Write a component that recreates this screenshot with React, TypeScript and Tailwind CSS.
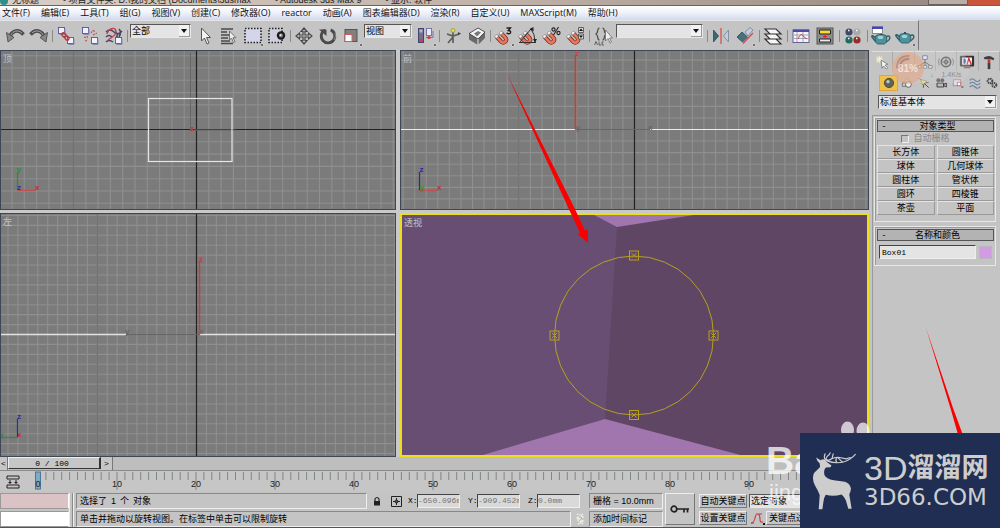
import React from "react";

type Kids = { children?: React.ReactNode };

const RED = "#c0504d";

function Tool({ label, children, more }: Kids & { label: string; more?: boolean }) {
  return (
    <button type="button" aria-label={label} title={label} className="h-6 w-6 shrink-0">
      <svg viewBox="0 0 24 24" className="h-6 w-6" fill="none">
        {children}
        {more && <path d="M20 20h2v2h-2z" fill="#111" stroke="#eee" strokeWidth=".5" />}
      </svg>
    </button>
  );
}

function Sep({ wide }: { wide?: boolean }) {
  return (
    <span className={wide ? "flex w-1 shrink-0 justify-center" : "flex w-[3px] shrink-0 justify-center"}>
      <span className="h-3 w-px bg-[#8a8a8a]" />
    </span>
  );
}

function Combo({ label, options, className }: { label: string; options: string[]; className: string }) {
  return (
    <span className={`relative shrink-0 ${className}`}>
      <select
        aria-label={label}
        className="block h-[14px] w-full appearance-none border border-r-[#e8e8e8] border-b-[#e8e8e8] border-t-[#555] border-l-[#555] bg-[#e4e4e4] pl-px text-[9px] leading-[12px] text-black"
      >
        {options.map((o) => (
          <option key={o}>{o}</option>
        ))}
      </select>
      <span className="pointer-events-none absolute top-px right-px flex h-3 w-[11px] items-center justify-center border-r border-b border-[#999] bg-[#f2f2f2]">
        <svg viewBox="0 0 6 4" className="h-1 w-1.5">
          <path d="M0 0h6L3 4z" fill="#111" />
        </svg>
      </span>
    </span>
  );
}

const Magnet = () => (
  <g>
    <path d="M4.500 12.500L9 17.500C12 20.300 15.800 16.700 13.300 13.700L9 9" stroke="#7d3226" strokeWidth="4.200" />
    <path d="M4.500 12.500L9 17.500C12 20.300 15.800 16.700 13.300 13.700L9 9" stroke="#ea765c" strokeWidth="2.600" />
    <path d="M3 13.800l3-2.800M7.500 10.300l3-2.800" stroke="#8a8a8a" strokeWidth="3" />
    <path d="M3.500 13.300l2-1.900M8 9.800l2-1.900" stroke="#f2f2f2" strokeWidth="2" />
  </g>
);

const Cube = ({ x, y }: { x: number; y: number }) => (
  <g>
    <rect x={x} y={y} width="6" height="6" fill="#f1f1fa" stroke="#54549a" strokeWidth=".9" />
    <path d={`M${x + 6.500} ${y + 1.500}v5.500h-5.500`} stroke="#8a8ab4" />
  </g>
);

const Teapot = ({ y }: { y: number }) => (
  <g transform={`translate(0 ${y})`}>
    <path d="M7 9c-2-4-5-4-4-2l4 5M17 7c4-3 6 2 0 5" stroke="#2f626b" strokeWidth="1.500" />
    <path d="M7 5.500c3-1.500 7-1.500 10 0 2 4 0 8.500-2 8.500H9c-2 0-4-4.500-2-8.500z" fill="#4a929c" stroke="#28545c" strokeWidth=".8" />
    <path d="M8.500 6.500c2-1 4-1 6 0l-1 2.500h-4z" fill="#9fd0d4" />
    <path d="M11 3h2v2h-2z" fill="#28545c" />
  </g>
);

const menus = [
  "文件(F)", "编辑(E)", "工具(T)", "组(G)", "视图(V)", "创建(C)", "修改器(O)", "reactor",
  "动画(A)", "图表编辑器(D)", "渲染(R)", "自定义(U)", "MAXScript(M)", "帮助(H)",
];

function TitleBar() {
  return (
    <header className="flex h-[6px] shrink-0 items-end overflow-hidden border-b border-[#6d625c] bg-gradient-to-r from-[#d9cfc6] via-[#c0b2a8] to-[#93857d] text-[9px] leading-[9px] whitespace-nowrap text-[#222]">
      <span className="h-[5px] w-2 rounded-b-sm bg-[#2f8f8f]" />
      <span className="ml-1">无标题</span>
      <span className="ml-6">- 项目文件夹: D:\我的文档 (Documents\3dsmax</span>
      <span className="ml-6">- Autodesk 3ds Max 9</span>
      <span className="ml-6">- 显示: 软件</span>
      <span className="ml-auto h-[5px] w-10 border border-t-0 border-[#6b5f5c] bg-[#b9aea8]" />
      <span className="h-[5px] w-8 bg-[#c9553c]" />
    </header>
  );
}

function MenuBar() {
  return (
    <nav className="flex h-[14px] shrink-0 items-center gap-[11px] bg-gradient-to-b from-white via-[#eef1fa] to-[#d3daee] pl-0.5 font-['Open_Sans','Noto_Sans_CJK_SC',sans-serif] text-[9px] leading-[14px] whitespace-nowrap text-[#111]">
      {menus.map((m) => (
        <button type="button" key={m}>{m}</button>
      ))}
    </nav>
  );
}

function ToolBar() {
  return (
    <div className="flex h-[30px] shrink-0">
      <div className="flex items-center border-t border-r border-t-[#e4e4e4] border-r-[#777] pr-px pl-[3px]">
        <Tool label="撤销">
          <path d="M6.500 14C8 7 15 4 20.500 10.500" stroke="#4c4c4c" strokeWidth="3.600" />
          <path d="M7.500 11.500C10 6.500 15 5.500 19 9" stroke="#a9a9a9" strokeWidth="1" />
          <path d="M3.500 8.500l1.500 9.500 6-4.500z" fill="#888" stroke="#444" strokeWidth=".8" />
        </Tool>
        <Tool label="重做">
          <path d="M17.500 14C16 7 9 4 3.500 10.500" stroke="#4c4c4c" strokeWidth="3.600" />
          <path d="M16.500 11.500C14 6.500 9 5.500 5 9" stroke="#a9a9a9" strokeWidth="1" />
          <path d="M20.500 8.500l-1.500 9.500-6-4.500z" fill="#888" stroke="#444" strokeWidth=".8" />
        </Tool>
        <Sep />
        <Tool label="选择并链接">
          <Cube x={4.500} y={3.500} />
          <Cube x={13.500} y={13.500} />
          <ellipse cx="10" cy="11" rx="2.500" ry="1.700" transform="rotate(45 10 11)" stroke="#b8383c" strokeWidth="1.300" />
          <ellipse cx="12.800" cy="14" rx="2.500" ry="1.700" transform="rotate(45 12.800 14)" stroke="#b8383c" strokeWidth="1.300" />
        </Tool>
        <Tool label="断开当前选择链接">
          <Cube x={4.500} y={3.500} />
          <Cube x={13.500} y={13.500} />
          <path d="M6 13l3 1M7 17l3-1M13 9l2-3M15 11l4-2M9 12l1 3M16 6v3" stroke="#c0575a" strokeWidth="1.200" strokeDasharray="2 1" />
        </Tool>
        <Tool label="绑定到空间扭曲">
          <path d="M4 8q4-4 8 0t8-1M4 13q3-3 6 0M4 18q3-3 7 0M13 8q4 2 1 6M17 5q3 3 0 8" stroke="#3f4468" strokeWidth="1.500" />
          <path d="M5 10c1-5 8-8 9-3s-5 6-8 9" stroke="#cc3f42" strokeWidth="1.400" />
          <Cube x={13.500} y={13.500} />
        </Tool>
        <Sep />
        <Combo label="选择过滤器" options={["全部", "几何体"]} className="mt-[3px] mr-0.5 ml-px w-[61px] self-start" />
        <Tool label="选择对象">
          <path d="M8.500 4v13l3-3 2.500 6 2-1-2.500-5.500h4z" fill="#f2f2f2" stroke="#555" />
        </Tool>
        <Tool label="按名称选择">
          <path d="M4 5h12M4 8h6M4 11h8M4 14h7M4 17h9M4 19.500h12" stroke="#4a4a4a" strokeWidth="1.600" />
          <path d="M12.500 7v9l2-2 2 4.500 1.500-.8-2-4h3z" fill="#eee" stroke="#666" strokeWidth=".9" />
        </Tool>
        <Tool label="矩形选择区域" more>
          <rect x="4" y="4.500" width="16" height="14" fill="#d5d5ea" stroke="#222" strokeWidth="1.600" strokeDasharray="1.500 1.500" />
        </Tool>
        <Tool label="窗口/交叉">
          <rect x="4" y="4.500" width="13" height="14" fill="#cfcfe0" stroke="#222" strokeWidth="1.600" strokeDasharray="1.500 1.500" />
          <circle cx="16" cy="11.500" r="4.200" fill="#1c1c1c" />
          <circle cx="16" cy="11.500" r="2" fill="#888" />
          <circle cx="15.500" cy="11" r=".9" fill="#eee" />
        </Tool>
        <Sep />
        <Tool label="选择并移动">
          <path d="M12 4l3 3.500h-2V11h3.500V9l3.500 3-3.500 3v-2H13v3.500h2L12 20l-3-3.500h2V13H7.500v2L4 12l3.500-3v2H11V7.500H9z" fill="#b9b9b9" stroke="#4a4a4a" strokeWidth="1.200" />
        </Tool>
        <Tool label="选择并旋转">
          <path d="M13.500 5.500A6.800 6.800 0 1 0 18 9" transform="rotate(-40 12 12)" stroke="#4a4a4a" strokeWidth="2.800" />
          <path d="M19 9a7 7 0 0 1-1 7" stroke="#999" strokeWidth=".8" />
          <path d="M3 5.500h7.500v6.500z" fill="#4a4a4a" />
        </Tool>
        <Tool label="选择并缩放" more>
          <rect x="5" y="5.500" width="12" height="12" fill="#808080" stroke="#555" />
          <rect x="5" y="10.500" width="7" height="7" fill="#fff" stroke="#d25a5a" />
        </Tool>
        <Combo label="参考坐标系" options={["视图", "屏幕", "世界"]} className="mt-[3px] mr-0.5 w-12 self-start" />
        <Tool label="使用轴点中心" more>
          <rect x="4.500" y="4.500" width="5" height="14" fill="#717192" stroke="#44446c" />
          <path d="M5.500 5.500h3v3h-3z" fill="#b4b4d0" />
          <rect x="12.500" y="4.500" width="5" height="7" fill="#ebebf7" stroke="#7676a8" />
          <path d="M12 13.500h7V7" stroke="#7676a8" />
          <circle cx="7" cy="16.500" r="1.600" fill="#d8353a" />
          <circle cx="15" cy="13.500" r="1.600" fill="#d8353a" />
        </Tool>
        <Sep />
        <Tool label="选择并操纵">
          <path d="M12 6v8M6 10l6 2 6-2M12 13l-5 6M12 13v6" stroke="#5a605a" strokeWidth="1.700" />
          <path d="M17 8l3 1.500-3 2z" fill="#444" />
          <circle cx="12" cy="6.500" r="2" fill="#eadb28" stroke="#8f8730" strokeWidth=".6" />
        </Tool>
        <Tool label="键盘快捷键覆盖切换">
          <path d="M4 9.500v6l9 5.500 7-7V8z" fill="#6a6a6a" />
          <path d="M4 9.500L13 4l7 4-7 7z" fill="#f4f4f4" stroke="#444" strokeWidth=".9" />
          <path d="M13 15v6" stroke="#eee" />
          <path d="M9 9.500l4-2.500 3 1.500-4 4z" fill="#787878" />
        </Tool>
        <Sep />
        <Tool label="捕捉开关" more>
          <Magnet />
          <path d="M14.500 4h4L16.300 6.500q3 .3 2.200 2.300-1.200 1.700-4 .4" stroke="#1d1d1d" strokeWidth="1.300" />
        </Tool>
        <Tool label="角度捕捉切换">
          <Magnet />
          <path d="M3 18.500h17M4 18L15 5M15 5q4 5 4 13" stroke="#333" strokeWidth="1" />
          <path d="M13.500 5l4-2v4.500zM17 15l2 3.500 2-3.500z" fill="#222" />
        </Tool>
        <Tool label="百分比捕捉切换">
          <Magnet />
          <circle cx="13.500" cy="5.500" r="1.600" stroke="#222" strokeWidth="1.100" />
          <circle cx="18.500" cy="9" r="1.600" stroke="#222" strokeWidth="1.100" />
          <path d="M13.500 11l5-8" stroke="#222" strokeWidth="1.100" />
        </Tool>
        <Tool label="微调器捕捉切换">
          <Magnet />
          <path d="M14.500 3.500h5v5h-5zM14.500 10h5v5h-5z" fill="#d8d8d8" stroke="#555" strokeWidth=".9" />
          <path d="M15 7h4l-2-2.500zM15 11.500h4l-2 2.500z" fill="#111" />
        </Tool>
        <Sep />
        <Tool label="编辑命名选择集">
          <path d="M8.500 4C5.500 4 8 9.500 4.500 10c3.500.5 1 6 4 6M11.500 4c3 0 .5 5.500 4 6-3.500.5-1 6-4 6" stroke="#4d4d4d" strokeWidth="1.200" />
          <path d="M3.500 21l1.500-3.500L6.500 21M8 17.500V21h2M12.500 18h-1.500v3h2" stroke="#555" strokeWidth=".9" />
          <path d="M14.500 6v11l2.500-2.500 2 4.500 1.500-1-2-4h3z" fill="#eee" stroke="#777" strokeWidth=".9" />
        </Tool>
        <Combo label="命名选择集" options={[""]} className="mt-[3px] mr-[3px] ml-px w-[87px] self-start" />
        <Sep />
        <Tool label="镜像">
          <path d="M4.500 6v12l5-6z" fill="#3c6672" stroke="#3a5c66" />
          <path d="M19.500 6v12l-5-6z" fill="#c5cedd" stroke="#8590a5" />
          <path d="M12 4v16" stroke="#d9474a" strokeWidth="1.200" />
        </Tool>
        <Tool label="对齐" more>
          <path d="M4 13l5-5 5.500 5-5 5z" fill="#44717c" stroke="#3a5c66" />
          <path d="M12 8l5-4.500 3 2.500-5 6z" fill="#c3cbdc" stroke="#8590a5" />
          <path d="M10 19.500L20 9" stroke="#d9474a" strokeWidth="1.200" />
        </Tool>
        <Sep wide />
        <Tool label="层管理器">
          <path d="M4 15h11l5 5H9zM4 10h11l5 5H9zM4 5h11l5 5H9z" fill="#f5f5f5" stroke="#333" strokeWidth="1.200" />
        </Tool>
        <Sep wide />
        <Tool label="曲线编辑器">
          <rect x="4" y="6" width="16" height="12.500" fill="#f3f3f8" stroke="#62628e" />
          <path d="M4 5.500h16v2.500H4z" fill="#4a4aa8" />
          <path d="M5 11h14M5 14.500h14M8 8v10M14 8v10" stroke="#8f8fae" strokeWidth=".8" />
          <path d="M9 15q3-8 6-2l3 2" stroke="#cb4f50" />
        </Tool>
        <Tool label="图解视图">
          <rect x="4" y="4" width="16" height="16" fill="#8d8d8d" stroke="#555" />
          <path d="M6.500 6h11v4h-11z" fill="#f2db3a" stroke="#222" />
          <path d="M6.500 15h11v3h-11z" fill="#e8e8e8" stroke="#222" />
          <path d="M12 10v4M10 12.500h4" stroke="#d22" />
        </Tool>
        <Sep wide />
        <Tool label="材质编辑器">
          <circle cx="8" cy="8" r="3.600" fill="#424869" />
          <circle cx="16" cy="8" r="3.600" fill="#a9a9a9" />
          <circle cx="8" cy="16" r="3.600" fill="#236a5d" />
          <circle cx="16" cy="16" r="3.600" fill="#972b2d" />
          <path d="M7 6.500h1.500M15 6.500h1.500M7 14.500h1.500M15 14.500h1.500" stroke="#fff" strokeWidth="1.300" />
        </Tool>
        <Sep wide />
        <Tool label="渲染场景对话框">
          <Teapot y={6} />
          <rect x="3.500" y="3" width="10" height="6.500" fill="#fff" stroke="#777" strokeWidth=".8" />
          <path d="M3 2.500h11v2.500H3z" fill="#4545b5" />
        </Tool>
        <Tool label="快速渲染" more>
          <Teapot y={5} />
        </Tool>
      </div>
    </div>
  );
}

type Box = { x: number; y: number; w: number; h: number };

/* Evenly spaced construction grid running outwards from the origin. */
function Grid({ box, ox, oy, step }: { box: Box; ox: number; oy: number; step: number }) {
  const xs: number[] = [];
  const ys: number[] = [];
  for (let x = ox - Math.floor((ox - box.x) / step) * step; x < box.x + box.w; x += step) xs.push(x);
  for (let y = oy - Math.floor((oy - box.y) / step) * step; y < box.y + box.h; y += step) ys.push(y);
  const d =
    xs.map((x) => `M${x} ${box.y}v${box.h}`).join("") + ys.map((y) => `M${box.x} ${y}h${box.w}`).join("");
  return (
    <>
      <path d={d} stroke="#8f8f8f" strokeWidth="1.100" />
      <path d={`M${ox - step * 10} ${box.y}v${box.h}`} stroke="#727272" strokeWidth="1.300" />
    </>
  );
}

function Viewport({ title, box, active, children }: Kids & { title: string; box: Box; active?: boolean }) {
  return (
    <section
      aria-label={title}
      className={
        active
          ? "relative min-h-0 min-w-0 overflow-hidden border-2 border-[#ecdf18] bg-[#5e4664]"
          : "relative min-h-0 min-w-0 overflow-hidden border border-[#3f4757] bg-[#7b7b7b]"
      }
    >
      <svg
        viewBox={`${box.x} ${box.y} ${box.w} ${box.h}`}
        preserveAspectRatio="xMidYMid slice"
        className="block h-full w-full"
        fill="none"
        fontFamily="Liberation Sans, sans-serif"
        fontSize="8"
        fontWeight="bold"
      >
        {children}
      </svg>
      <h2 className="absolute top-0.5 left-0.5 text-[9px] leading-[12px] text-[#c3c3c3]">{title}</h2>
    </section>
  );
}

const TOP: Box = { x: 1, y: 51, w: 394, h: 158 };
const FRONT: Box = { x: 401, y: 51, w: 467, h: 158 };
const LEFT: Box = { x: 1, y: 214, w: 394, h: 242 };
const PERSP: Box = { x: 402, y: 215, w: 465, h: 240 };

const orbit = Array.from({ length: 32 }, (_, i) => {
  const a = (i * Math.PI) / 16;
  return `${(634 + 79.5 * Math.cos(a)).toFixed(1)},${(335.5 + 79.5 * Math.sin(a)).toFixed(1)}`;
}).join(" ");

const handles = [[634, 255.5], [554.5, 335.5], [713.5, 335.5], [634, 415]];

function Viewports() {
  return (
    <div className="grid min-w-0 flex-1 grid-cols-[396fr_469fr] grid-rows-[160fr_244fr] gap-x-1 gap-y-[3px] bg-[#c9c9c9]">
      <Viewport title="顶" box={TOP}>
        <Grid box={TOP} ox={196.5} oy={129.5} step={12.3} />
        <path d="M0 129.500h396M196.500 50v160" stroke="#222" strokeWidth="1.200" />
        <path d="M190.500 53v77h45" stroke="#666" />
        <rect x="148.500" y="98.500" width="83.500" height="63" stroke="#e6e6e6" strokeWidth="1.200" />
        <text x="190" y="131" fill="#c2383a">z</text>
        <path d="M17.500 190.500V172" stroke="#23962a" strokeWidth="1.200" />
        <path d="M17.500 190.500H36" stroke={RED} strokeWidth="1.200" />
        <text x="16.500" y="172" fill="#23962a">y</text>
        <text x="35" y="190" fill="#b93333">x</text>
        <text x="17" y="190" fill="#2929b0">z</text>
      </Viewport>
      <Viewport title="前" box={FRONT}>
        <Grid box={FRONT} ox={634.5} oy={129.5} step={11.57} />
        <path d="M634.500 50v160" stroke="#222" strokeWidth="1.200" />
        <path d="M400 129.500h175M650 129.500h220" stroke="#ededed" strokeWidth="1.200" />
        <path d="M576 129.500h74" stroke="#666" />
        <path d="M575.500 129.500V55" stroke="#c83c3a" strokeWidth="1.600" />
        <text x="575" y="56" fill="#d2383a">z</text>
        <text x="576" y="130" fill="#666">y</text>
        <text x="648" y="130" fill="#666">x</text>
        <path d="M419.500 190.500V172" stroke="#2929b0" strokeWidth="1.200" />
        <path d="M419.500 190.500H438" stroke={RED} strokeWidth="1.200" />
        <text x="419.500" y="172" fill="#2929b0">z</text>
        <text x="437" y="190" fill="#b93333">x</text>
        <text x="419.500" y="190" fill="#23962a">y</text>
      </Viewport>
      <Viewport title="左" box={LEFT}>
        <Grid box={LEFT} ox={196.5} oy={334.5} step={9.92} />
        <path d="M196.500 213v244" stroke="#222" strokeWidth="1.200" />
        <path d="M0 334.500h126M200 334.500h196" stroke="#e3e3e3" strokeWidth="1.400" />
        <path d="M126 334.500h74" stroke="#666" />
        <path d="M199.500 335V261" stroke="#c83c3a" strokeWidth="1.400" />
        <text x="199" y="262" fill="#d2383a">z</text>
        <text x="125" y="334" fill="#666">y</text>
        <text x="199" y="334" fill="#666">x</text>
        <path d="M17.500 437.500V419" stroke="#2929b0" strokeWidth="1.200" />
        <path d="M17.500 437.500H0" stroke="#23962a" strokeWidth="1.200" />
        <text x="17" y="419" fill="#2929b0">z</text>
        <text x="17" y="437" fill="#b93333">x</text>
        <text x="-1" y="437" fill="#23962a">y</text>
      </Viewport>
      <Viewport title="透视" box={PERSP} active>
        <path d="M400 213H617V227L605 419L478 457H400z" fill="#694e73" />
        <path d="M594 215L617 227L694 215z" fill="#a176ae" />
        <path d="M476 457L605 419L748 457z" fill="#a176ae" />
        <polygon points={orbit} stroke="#b7a01c" />
        {handles.map(([x, y]) => (
          <g key={`${x}-${y}`} stroke="#b7a01c">
            <rect x={x - 4.5} y={y - 4.5} width="9" height="9" />
            <path d={`M${x - 2.5} ${y - 2.5}l5 5m0-5l-5 5`} />
          </g>
        ))}
      </Viewport>
    </div>
  );
}

function PanelIcon({ label, children, on, tab }: Kids & { label: string; on?: boolean; tab?: boolean }) {
  return (
    <button
      type="button"
      aria-label={label}
      className={
        tab
          ? "flex h-5 min-w-0 flex-1 items-center justify-center border-t border-r border-t-[#ddd] border-r-[#aaa]"
          : on
            ? "flex h-4 min-w-0 flex-1 items-center justify-center border border-[#d9a93a] bg-[#f1c24a]"
            : "flex h-4 min-w-0 flex-1 items-center justify-center"
      }
    >
      <svg viewBox="0 0 18 18" className={tab ? "h-4 w-4 shrink-0" : "h-3 w-3 shrink-0"} fill="none">
        {children}
      </svg>
    </button>
  );
}

function Rollout({ title, children }: Kids & { title: string }) {
  return (
    <section className="border border-[#e8e8e8] p-0.5 pr-px shadow-[inset_1px_1px_0_#999]">
      <button
        type="button"
        className="flex h-3 w-full items-center border border-[#555] bg-[#b3b3b3] text-[9px] leading-[10px] text-black"
      >
        <span className="w-3 text-center">-</span>
        <span className="flex-1 pr-2 text-center">{title}</span>
      </button>
      {children}
    </section>
  );
}

const shapes = ["长方体", "圆锥体", "球体", "几何球体", "圆柱体", "管状体", "圆环", "四棱锥", "茶壶", "平面"];

function CommandPanel() {
  return (
    <aside className="relative flex w-[131px] shrink-0 flex-col pl-[3px] text-[9px]">
      <div className="flex pt-px">
        <PanelIcon label="创建" tab>
          <path d="M6 2v8M2 6h8M3 3l6 6M9 3L3 9" stroke="#f5f0c0" strokeWidth="1.200" />
          <path d="M8 7l1 9 2-2.500 3 3.500 1.500-1.500-3-3 3-1z" fill="#f4f4f4" stroke="#666" strokeWidth=".8" />
        </PanelIcon>
        <PanelIcon label="修改" tab>
          <path d="M4 16C4 8 8 4 16 4" stroke="#433f5e" strokeWidth="5.500" />
          <path d="M3.500 16C3.500 8 8 3.500 16 3.500" stroke="#b7a4b4" strokeWidth="1.500" />
        </PanelIcon>
        <PanelIcon label="层次" tab>
          <path d="M9 5v4M9 9L3 13M9 9v5M9 9l6 4" stroke="#444" />
          <path d="M6.500 2h5v4h-5z" fill="#fff" stroke="#4b4b92" />
          <path d="M1 13h4v3H1zM7 13h4v3H7zM13 13h4v3h-4z" fill="#eee" stroke="#666" />
        </PanelIcon>
        <PanelIcon label="运动" tab>
          <circle cx="9" cy="9" r="5.500" fill="#b5b5b5" stroke="#333" strokeWidth="1.300" />
          <circle cx="9" cy="9" r="2" stroke="#333" />
          <path d="M9 4v10M4 9h10M1.500 5q-2 4 0 8M16.500 5q2 4 0 8" stroke="#555" strokeWidth=".8" />
        </PanelIcon>
        <PanelIcon label="显示" tab>
          <rect x="1" y="2" width="16" height="12" rx="1" fill="#333" />
          <path d="M3.500 4h11v8h-11z" fill="#fff" />
          <path d="M5 5v6h2q2-3 0-6z" fill="#3a43c6" />
          <path d="M9 12l2-7 3 7" stroke="#d2302f" strokeWidth="1.600" />
          <path d="M6 14h6l1 2H5z" fill="#555" />
        </PanelIcon>
        <PanelIcon label="工具" tab>
          <path d="M3 4q5-3 9-1l3 2-1 2-3-1H4z" fill="#3e3e3e" />
          <path d="M7.500 6h3v4h-3z" fill="#c03a34" />
          <path d="M7.500 10h3v7h-3z" fill="#3e3e3e" />
        </PanelIcon>
      </div>
      <div className="mt-1 flex pl-[7px]">
        <PanelIcon label="几何体" on>
          <circle cx="9" cy="9" r="7" fill="#5f635c" stroke="#333" />
          <circle cx="7.500" cy="7" r="2.500" fill="#c5c9bb" />
        </PanelIcon>
        <PanelIcon label="图形">
          <path d="M9 2l6 6H3z" fill="#ddd" stroke="#666" />
          <circle cx="11" cy="11" r="4.500" fill="#eee" stroke="#555" strokeWidth="1.300" />
          <path d="M2 9h5v5H2z" fill="#ccc" stroke="#555" />
        </PanelIcon>
        <PanelIcon label="灯光">
          <path d="M2 2l14 14M9 9l-1 7M9 9l7-1" stroke="#555" strokeWidth="1.500" />
          <path d="M4 4l9 2-6 6z" fill="#efe487" stroke="#8d8331" />
        </PanelIcon>
        <PanelIcon label="摄影机">
          <circle cx="5" cy="5" r="3" fill="#444" />
          <circle cx="11" cy="5" r="3" fill="#444" />
          <path d="M3 9h10v6H3zM13 11l4-2v6l-4-2z" fill="#bbb" stroke="#333" strokeWidth="1.300" />
        </PanelIcon>
        <PanelIcon label="辅助对象">
          <path d="M2 4h11v9H2z" fill="#dfe1f2" stroke="#777" />
          <path d="M8 8h5v5H8z" fill="#fff" stroke="#c44" />
          <path d="M14 15h3" stroke="#333" strokeWidth="1.500" />
        </PanelIcon>
        <PanelIcon label="空间扭曲">
          <path d="M1 5q4-4 8 0t8-1M1 10q4-4 8 0t8-1M1 15q4-4 8 0t8-1" stroke="#6781a3" strokeWidth="1.600" />
        </PanelIcon>
        <PanelIcon label="系统">
          <circle cx="6" cy="6" r="3.500" stroke="#444" strokeWidth="3" strokeDasharray="2 1" />
          <circle cx="12.500" cy="12" r="3" stroke="#444" strokeWidth="3" strokeDasharray="2 1" />
        </PanelIcon>
      </div>
      <Combo label="对象类别" options={["标准基本体", "扩展基本体"]} className="mt-1 mr-[3px] ml-1.5 block" />
      <div className="mt-1.5 flex flex-1 flex-col gap-1 border-t border-l border-[#999] pt-px pr-1 pl-px">
        <Rollout title="对象类型">
          <label className="flex h-[13px] items-center justify-center gap-1 pr-5 text-[#888]">
            <input
              type="checkbox"
              className="h-2 w-2 appearance-none border border-t-[#777] border-r-[#eee] border-b-[#eee] border-l-[#777]"
            />
            自动栅格
          </label>
          <div className="grid grid-cols-2 gap-x-0.5 pb-1">
            {shapes.map((s) => (
              <button
                type="button"
                key={s}
                className="h-[14px] border border-t-[#e4e4e4] border-r-[#999] border-b-[#999] border-l-[#e4e4e4] leading-[12px] text-black"
              >
                {s}
              </button>
            ))}
          </div>
        </Rollout>
        <Rollout title="名称和颜色">
          <div className="flex items-center gap-[3px] px-0.5 py-1">
            <input
              aria-label="名称"
              defaultValue="Box01"
              className="h-[14px] min-w-0 flex-1 border border-t-[#444] border-r-[#eee] border-b-[#eee] border-l-[#444] bg-[#e4e4e4] pl-0.5 font-['Liberation_Mono',monospace] text-[8px] text-black"
            />
            <button type="button" aria-label="颜色" className="h-[13px] w-[13px] border border-[#b9b9b9] bg-[#d49be5]" />
          </div>
        </Rollout>
      </div>
      <div className="pointer-events-none absolute top-0.5 left-[23px] h-[31px] w-[78px] rounded-full bg-[#d0d0d0]/35">
        <span className="absolute top-0 left-0 flex h-8 w-8 items-center justify-center rounded-full bg-[#e8a27c]/55 text-[10px] font-bold text-white/60">
          81%
        </span>
        <span className="absolute bottom-1 left-[38px] text-[7px] leading-[8px] whitespace-nowrap text-[#8f8f8f]">
          <span className="mr-2 text-[#63a878]">↓</span>1.4K/s
        </span>
      </div>
    </aside>
  );
}

function TimeSlider() {
  return (
    <div className="flex h-[14px] shrink-0 border-b border-[#8a8a8a] bg-[#bebebe] font-['Liberation_Mono',monospace] text-[8px] leading-[11px] text-black">
      <button type="button" aria-label="上一帧" className="w-2 border-r border-[#777] bg-[#c6c6c6]">&lt;</button>
      <button
        type="button"
        className="h-3 w-[93px] border border-t-[#eee] border-r-2 border-r-[#333] border-b-[#333] border-l-[#eee] bg-[#c6c6c6] pr-1"
      >
        0 / 100
      </button>
      <button type="button" aria-label="下一帧" className="w-3 border-r border-[#777] bg-[#c6c6c6]">&gt;</button>
    </div>
  );
}

function TrackBar() {
  const ticks = Array.from({ length: 101 }, (_, i) => 38 + i * 7.9);
  return (
    <div className="h-5 shrink-0 overflow-hidden bg-[#c6c6c6]">
      <svg width="1000" height="20" viewBox="0 0 1000 20" fill="none" className="block">
        <path d={ticks.map((x, i) => `M${x} 1v${i % 10 ? 8 : 18}`).join("")} stroke="#7f8886" />
        <rect x="35.500" y="1" width="5" height="17" fill="#7fa9c4" stroke="#4a7894" />
        {Array.from({ length: 10 }, (_, i) => (
          <text
            key={i}
            x={38 + i * 79}
            y="16"
            textAnchor="middle"
            fontFamily="Liberation Sans, sans-serif"
            fontSize="9"
            fill="#222"
          >
            {i * 10}
          </text>
        ))}
        <path d="M7 5h12M7 8h12M7 14h12M7 17h12M7 5v3M19 5v3M7 14v3M19 14v3M10 9v4M16 9v4M8.500 11.500h3M14.500 11.500h3" stroke="#222" />
      </svg>
    </div>
  );
}

const sunken = "border border-t-[#888] border-l-[#888] border-r-[#eee] border-b-[#eee]";

function Coord({ axis, value }: { axis: string; value: string }) {
  return (
    <label className="flex items-center font-['Liberation_Mono',monospace] text-[8px] text-black">
      <span className="w-2 whitespace-nowrap">{axis}:</span>
      <input
        defaultValue={value}
        className="ml-px h-[14px] w-[43px] border border-t-[#444] border-r-[#eee] border-b-[#eee] border-l-[#444] bg-[#d9d9d9] text-[#777]"
      />
    </label>
  );
}

function StatusBar() {
  return (
    <footer className="flex h-9 shrink-0 pt-0.5 text-[9px] leading-[14px] whitespace-nowrap text-black">
      <div className="mr-0.5 flex w-[70px] flex-col gap-0.5 border-r border-[#eee]">
        <input aria-label="宏录制器" className="h-4 w-full border border-[#999] border-r-white bg-[#dbc2c4]" />
        <input aria-label="侦听器" className="h-4 w-full border border-[#999] border-r-white bg-white" />
      </div>
      <div className="mr-0.5 w-0.5 border-l border-[#888] bg-[#eee]" />
      <div className="flex w-[587px] flex-col gap-0.5">
        <div className="flex h-4 items-center">
          <div className={`flex h-4 w-[291px] gap-1 pl-[3px] ${sunken}`}>
            <span>选择了</span>
            <span>1</span>
            <span>个</span>
            <span>对象</span>
          </div>
          <button type="button" aria-label="选择锁定切换" className="ml-1 flex w-3 justify-center">
            <svg viewBox="0 0 8 10" className="h-2.5 w-2" fill="none">
              <path d="M2 5V3q2-3 4 0v2" stroke="#222" strokeWidth="1.200" />
              <path d="M1 5h6v4.500H1z" fill="#222" />
            </svg>
          </button>
          <button type="button" aria-label="绝对模式变换输入" className="mr-1.5 ml-2">
            <svg viewBox="0 0 11 11" className="h-[11px] w-[11px]" fill="none" stroke="#222">
              <path d="M.5.5h10v10H.5zM5.500 2v7M2 5.500h7" />
              <circle cx="5.500" cy="5.500" r="1.500" fill="#555" />
            </svg>
          </button>
          <div className="flex gap-2">
            <Coord axis="X" value="-650.096mm" />
            <Coord axis="Y" value="-909.452mm" />
            <Coord axis="Z" value="0.0mm" />
          </div>
          <div className={`ml-auto h-4 w-[74px] pl-[3px] ${sunken}`}>栅格 = 10.0mm</div>
        </div>
        <div className="flex h-4 items-center">
          <div className={`h-4 w-[495px] pl-[3px] ${sunken}`}>单击并拖动以旋转视图。在标签中单击可以限制旋转</div>
          <svg viewBox="0 0 10 12" className="ml-1 h-3 w-2.5" fill="none">
            <path d="M2 1l6 3-5 3 5 4M8 1L2 5l6 3-5 3" stroke="#eceade" strokeWidth="1.500" />
            <path d="M3 2l4 3-3 3" stroke="#999" strokeWidth=".7" />
          </svg>
          <button type="button" className={`ml-auto h-4 w-[74px] pl-[3px] text-left ${sunken}`}>添加时间标记</button>
        </div>
      </div>
      <button
        type="button"
        aria-label="设置关键点"
        className="ml-0.5 flex h-8 w-[30px] items-center justify-center border border-t-[#eee] border-r-[#777] border-b-[#777] border-l-[#eee]"
      >
        <svg viewBox="0 0 20 10" className="h-2.5 w-5" fill="none" stroke="#222" strokeWidth="1.700">
          <circle cx="4" cy="5" r="2.800" />
          <path d="M7 5h12M14 5v3.500M17.500 5v3.500" />
        </svg>
      </button>
      <div className="ml-1 flex flex-col gap-[3px] pt-px">
        <button type="button" className="h-[14px] w-12 border border-t-[#eee] border-r-[#777] border-b-[#777] border-l-[#eee] leading-[12px]">
          自动关键点
        </button>
        <button type="button" className="h-[14px] w-12 border border-t-[#eee] border-r-[#777] border-b-[#777] border-l-[#eee] leading-[12px]">
          设置关键点
        </button>
      </div>
      <div className="ml-0.5 flex flex-col gap-[3px] pt-px">
        <Combo label="关键点选择" options={["选定对象"]} className="w-24" />
        <div className="flex">
          <svg viewBox="0 0 16 14" className="h-[14px] w-4" fill="none">
            <path d="M2 12q3 0 4-5t3-4 2 5 3 3" stroke="#cc4242" strokeWidth="1.200" />
            <path d="M2 12h3M10 3h3" stroke="#5555a5" />
            <path d="M14 12h2v2h-2z" fill="#111" />
          </svg>
          <button type="button" className="ml-px h-[14px] border border-t-[#eee] border-r-[#777] border-b-[#777] border-l-[#eee] px-0.5 leading-[12px]">
            关键点过滤器...
          </button>
        </div>
      </div>
    </footer>
  );
}

function Brand() {
  return (
    <div className="absolute right-0 bottom-0 flex h-[95px] w-[200px] items-center bg-[#212e53] pl-3 text-[#cdcdcd]">
      <svg viewBox="20 22 134 172" className="h-[58px] w-[45px] shrink-0" fill="none">
        <path
          d="M32 38L46 46Q52 41 58 45L63 51L78 62L75 67L61 68Q54 76 57 90Q62 102 85 106L118 110Q132 114 136 130Q136 138 131 148L138 191H128L121 166Q116 154 108 148Q84 156 61 149Q55 158 54 170L51 192H40L43 150Q38 136 30 124Q18 102 26 84Q36 74 44 66L43 56Q35 50 32 38z"
          fill="#cdcdcd"
        />
        <path
          d="M60 46Q54 36 59 27M62 46Q61 36 71 30L74 24M64 45Q74 48 80 40L83 27M64 48Q92 58 118 50Q136 44 149 29M78 42Q90 36 102 38L122 42L134 38M94 53Q88 46 94 39M112 52Q104 46 98 39"
          stroke="#cdcdcd"
          strokeWidth="3.500"
          strokeLinecap="round"
        />
      </svg>
      <div className="ml-[7px] flex flex-col whitespace-nowrap">
        <span className="flex items-center font-['Liberation_Sans','Noto_Sans_CJK_SC',sans-serif] leading-[32px]">
          <span className="text-[34px]">3D</span>
          <span className="text-[27px] font-bold">溜溜网</span>
        </span>
        <span className="font-['DejaVu_Sans',sans-serif] text-[23px] leading-[26px]">3D66.COM</span>
      </div>
    </div>
  );
}

function Annotations() {
  return (
    <div className="pointer-events-none absolute inset-0 overflow-hidden">
      <svg width="1000" height="528" viewBox="0 0 1000 528" className="block">
        <path d="M506 72L567 205L580 233L578 234.500L588 243L588 229.500L585 230.500L573 205z" fill="#fb0000" />
        <path d="M926 328L951 410L959 438H964L953 408z" fill="#fb0000" />
        <ellipse cx="847.500" cy="430" rx="6.500" ry="8.500" fill="#fff" opacity=".7" />
        <ellipse cx="863" cy="431" rx="6.500" ry="8.500" fill="#fff" opacity=".7" />
      </svg>
      <span className="absolute top-[442px] left-[766px] font-['Liberation_Sans',sans-serif] text-[39px] leading-[38px] font-bold text-white/75">
        Bai
      </span>
      <span className="absolute top-[482px] left-[769px] font-['Liberation_Sans',sans-serif] text-[22px] leading-[22px] text-white/70">
        jing
      </span>
    </div>
  );
}

export default function App() {
  return (
    <div className="relative flex h-screen flex-col overflow-hidden bg-[#c4c4c4] font-['Liberation_Sans','Noto_Sans_CJK_SC',sans-serif]">
      <TitleBar />
      <MenuBar />
      <ToolBar />
      <main className="flex min-h-0 flex-1">
        <Viewports />
        <CommandPanel />
      </main>
      <TimeSlider />
      <TrackBar />
      <StatusBar />
      <div className="h-px shrink-0 bg-[#5e514c]" />
      <Annotations />
      <Brand />
    </div>
  );
}
